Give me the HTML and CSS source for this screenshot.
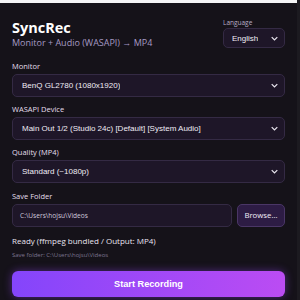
FILE: index.html
```html
<!DOCTYPE html>
<html>
<head>
<meta charset="utf-8">
<link rel="stylesheet" href="styles.css">
</head>
<body>
<div class="topbar"></div>
<div class="app">
  <div class="header">
    <div class="brand">
      <h1 class="title">SyncRec</h1>
      <div class="subtitle">Monitor + Audio (WASAPI) → MP4</div>
    </div>
    <div class="lang">
      <div class="lang-label">Language</div>
      <div class="select select-sm"><span>English</span><svg class="chev" viewBox="0 0 10 6" width="7" height="5"><path d="M1 1l4 4 4-4" fill="none" stroke="#e8e4ee" stroke-width="1.8"/></svg></div>
    </div>
  </div>

  <div class="field first">
    <div class="label">Monitor</div>
    <div class="select"><span>BenQ GL2780 (1080x1920)</span><svg class="chev" viewBox="0 0 10 6" width="7" height="5"><path d="M1 1l4 4 4-4" fill="none" stroke="#e8e4ee" stroke-width="1.8"/></svg></div>
  </div>

  <div class="field">
    <div class="label">WASAPI Device</div>
    <div class="select"><span>Main Out 1/2 (Studio 24c) [Default] [System Audio]</span><svg class="chev" viewBox="0 0 10 6" width="7" height="5"><path d="M1 1l4 4 4-4" fill="none" stroke="#e8e4ee" stroke-width="1.8"/></svg></div>
  </div>

  <div class="field">
    <div class="label">Quality (MP4)</div>
    <div class="select"><span>Standard (~1080p)</span><svg class="chev" viewBox="0 0 10 6" width="7" height="5"><path d="M1 1l4 4 4-4" fill="none" stroke="#e8e4ee" stroke-width="1.8"/></svg></div>
  </div>

  <div class="field folder">
    <div class="label">Save Folder</div>
    <div class="row">
      <div class="input">C:\Users\hojsu\Videos</div>
      <div class="btn">Browse...</div>
    </div>
  </div>

  <div class="status">Ready (ffmpeg bundled / Output: MP4)</div>
  <div class="savepath">Save folder: C:\Users\hojsu\Videos</div>

  <div class="start">Start Recording</div>
</div>
</body>
</html>
```
FILE: styles.css
```css
html, body {
  margin: 0;
  padding: 0;
  background: #151219;
  height: 300px;
  overflow: hidden;
}
body {
  font-family: "Open Sans", "Noto Sans", sans-serif;
  color: #ece8f2;
  border-right: 3px solid #1c1a20;
  box-sizing: border-box;
}
.topbar {
  height: 3px;
  background: #f4f4f6;
}
.app {
  padding: 0 12px;
  width: 273px;
}
.header {
  display: flex;
  justify-content: space-between;
  align-items: flex-start;
  padding-top: 15px;
}
.title {
  margin: 1px 0 0 0;
  font-size: 14.5px;
  font-weight: 700;
  line-height: 18px;
  color: #ffffff;
}
.subtitle {
  font-size: 9px;
  color: #a59ac4;
  line-height: 12px;
}
.lang {
  width: 62px;
}
.lang-label {
  font-size: 6.5px;
  color: #b7adc8;
  line-height: 9px;
  margin-bottom: 1px;
}
.select {
  display: flex;
  align-items: center;
  justify-content: space-between;
  height: 23px;
  box-sizing: border-box;
  border: 1px solid #342a44;
  border-radius: 5px;
  background: #1e1628;
  padding: 0 6px 0 9px;
  font-family: "Liberation Sans", Arial, sans-serif;
  font-size: 8px;
  color: #f0ecf5;
}
.select span {
  white-space: nowrap;
  overflow: hidden;
}
.select-sm {
  height: 20px;
  padding-left: 8px;
}
.chev {
  flex: none;
}
.field {
  margin-top: 7px;
}
.field.first {
  margin-top: 12px;
}
.field.folder {
  margin-top: 8px;
}
.label {
  font-size: 7.5px;
  line-height: 10px;
  color: #e4dfec;
  margin-bottom: 3px;
}
.row {
  display: flex;
  gap: 5px;
}
.input {
  flex: 1;
  height: 23px;
  box-sizing: border-box;
  border: 1px solid #342a44;
  border-radius: 5px;
  background: #1e1628;
  padding: 0 7px;
  font-size: 6.6px;
  line-height: 21px;
  color: #cfc8dc;
}
.btn {
  width: 48px;
  height: 23px;
  box-sizing: border-box;
  border: 1px solid #4a3666;
  border-radius: 5px;
  background: #2d1c44;
  font-size: 7.8px;
  line-height: 21px;
  text-align: center;
  color: #f2eef7;
}
.status {
  margin-top: 8px;
  font-size: 8px;
  line-height: 11px;
  color: #e8e3ef;
}
.savepath {
  margin-top: 5px;
  font-size: 6px;
  line-height: 9px;
  color: #7e7690;
}
.start {
  margin-top: 11px;
  height: 26px;
  border-radius: 6px;
  background: linear-gradient(90deg, #8445fb, #bb4cf3);
  box-shadow: 0 0 8px rgba(150, 70, 250, 0.45);
  font-family: "Liberation Sans", Arial, sans-serif;
  font-weight: 700;
  font-size: 9.2px;
  line-height: 26px;
  text-align: center;
  color: #ffffff;
}
```
